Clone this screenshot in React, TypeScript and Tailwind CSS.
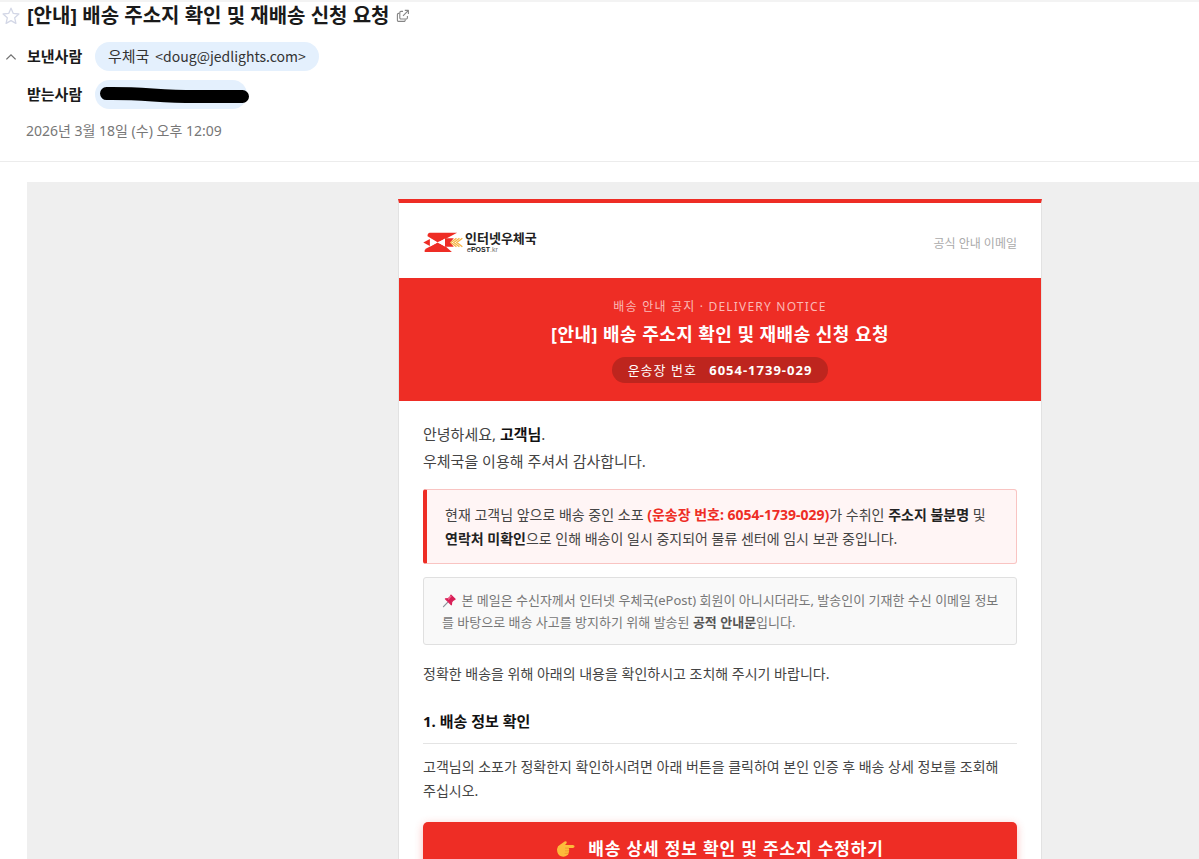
import React from "react";

function StarIcon() {
  return (
    <svg viewBox="0 0 18 18" className="h-[18px] w-[18px]" fill="none" stroke="#d3d7e6" strokeWidth="1.3" strokeLinejoin="round" aria-hidden="true">
      <path d="M9 1.2l2.3 5.2 5.6.6-4.2 3.8 1.2 5.6L9 13.6l-4.9 2.8 1.2-5.6L1.1 7l5.6-.6z" />
    </svg>
  );
}

function PopupIcon() {
  return (
    <svg viewBox="0 0 14 14" className="h-[14px] w-[14px]" fill="none" stroke="#858585" strokeWidth="1.1" strokeLinejoin="round" aria-hidden="true">
      <path d="M3.4 4.4H2.6a1.2 1.2 0 0 0-1.2 1.2v5.6a1.2 1.2 0 0 0 1.2 1.2H8a1.2 1.2 0 0 0 1.2-1.2v-.8" />
      <path d="M7 2.4H5A1.2 1.2 0 0 0 3.8 3.6v5.2A1.2 1.2 0 0 0 5 10h5.2a1.2 1.2 0 0 0 1.2-1.2V7M8.8 1.4h3.6V5M12.2 1.6L7 6.8" />
    </svg>
  );
}

function PostLogo() {
  return (
    <svg viewBox="0 0 120 64" className="h-[21px] w-[40px]" aria-hidden="true">
      <g fill="#ee2d25">
        <path d="M19 2H103L70 20L43 31L13 13Q12 4 19 2z" />
        <path d="M4 61Q2 54 9 50L43 32L70 46L87 61z" />
        <path d="M0 32L20 21V43z" />
        <path d="M66 19H93L82 32L93 45H66z" />
      </g>
      <path d="M21 20L43 32L21 44z M66 20L46 32L66 44z" fill="#fff" />
      <path d="M101 19L84 32L101 45M110 19L93 32L110 45M119 19L102 32L119 45" fill="none" stroke="#f6b445" strokeWidth="4" />
    </svg>
  );
}

function PinIcon() {
  return (
    <svg viewBox="0 0 16 16" className="mr-[1px] inline-block h-[15px] w-[15px] align-[-3px]" aria-hidden="true">
      <path d="M1.6 14.6L6 10" stroke="#8c939b" strokeWidth="1.3" strokeLinecap="round" />
      <path d="M9.6 2.2L14 6.6L12 7.6L10.4 9.4L10 12.6L3.6 6.2L6.8 5.8L8.6 4.2z" fill="#d81f57" stroke="#d81f57" strokeWidth="1.2" strokeLinejoin="round" />
      <path d="M9.6 3.4L7 6.4" stroke="#f4628c" strokeWidth="1.4" strokeLinecap="round" />
    </svg>
  );
}

function PointingHandIcon() {
  return (
    <svg viewBox="0 0 19 18" className="h-[18px] w-[19px]" aria-hidden="true">
      <path d="M1 9.2Q1.4 6 4.4 4.6L8.6 1.4Q10.6.6 10.8 2.4Q10.6 3.8 9 5H16.8Q18.6 5.2 18.6 6.6Q18.4 8 16.8 8.1H12.6Q13.8 9.4 12.9 10.6Q13.6 12 12.4 13.2Q12.6 15 10.8 15.6Q9.6 17 6 16.6Q1 15.6 1 9.2z" fill="#fdbb3b" />
      <path d="M12.4 8.1H9.4M12.8 10.8H9.4M12.2 13.4H9" stroke="#ee9a2c" strokeWidth=".8" strokeLinecap="round" fill="none" />
    </svg>
  );
}

function MailHeader() {
  return (
    <header className="border-b border-[#ececec] pb-5 text-[#1a1a1a]">
      <div className="flex h-[30px] items-center border-t-2 border-[#f3f3f3]">
        <button type="button" aria-label="중요 표시" className="flex w-[27px] shrink-0 pl-[2px]">
          <StarIcon />
        </button>
        <h1 className="text-[20px] leading-7 font-bold">[안내] 배송 주소지 확인 및 재배송 신청 요청</h1>
        <button type="button" aria-label="새 창으로 보기" className="ml-[7px]">
          <PopupIcon />
        </button>
      </div>
      <dl className="mt-3 flex flex-col gap-[9px] text-[15px] leading-[29px]">
        <div className="flex items-center">
          <dt className="flex w-[95px] shrink-0 items-center font-bold">
            <button type="button" aria-label="접기" className="flex w-[27px] pl-[5px]">
              <svg viewBox="0 0 12 12" className="h-3 w-3" fill="none" stroke="#6f6f6f" strokeWidth="1.3" aria-hidden="true">
                <path d="M1.4 8.4L6 3.8l4.6 4.6" />
              </svg>
            </button>
            보낸사람
          </dt>
          <dd className="rounded-full bg-[#e4f0fd] px-[13px] text-[#333]">
            우체국 <span className="ml-[2px] font-['Noto_Sans_CJK_KR',sans-serif] text-[14px]">&lt;doug@jedlights.com&gt;</span>
          </dd>
        </div>
        <div className="flex items-center">
          <dt className="w-[95px] shrink-0 pl-[27px] font-bold">받는사람</dt>
          <dd className="relative h-[29px] w-[152px] rounded-full bg-[#e4f0fd]">
            <svg viewBox="0 0 156 29" className="absolute top-0 left-0 h-[29px] w-[156px]" fill="none" stroke="#000" strokeWidth="13" strokeLinecap="round" aria-hidden="true">
              <path d="M11.500 13.500C50 13 62 16.500 100 16.500H147.500" />
            </svg>
          </dd>
        </div>
      </dl>
      <p className="mt-3 pl-[26px] text-[14px] leading-5 text-[#777]">2026년 3월 18일 (수) 오후 12:09</p>
    </header>
  );
}

function NoticeBanner() {
  return (
    <section className="flex flex-col items-center bg-[#ee2d25] pt-[19px] pb-[18px] text-center text-white">
      <p className="text-[12px] leading-5 tracking-widest text-[#fbb9b6]">배송 안내 공지 · DELIVERY NOTICE</p>
      <h2 className="mt-[3px] text-[18px] leading-7 font-bold tracking-wide">[안내] 배송 주소지 확인 및 재배송 신청 요청</h2>
      <p className="mt-[9px] rounded-full bg-[#be251e] px-4 text-[13px] leading-[26px] tracking-[1px]">
        운송장 번호 <strong className="ml-2">6054-1739-029</strong>
      </p>
    </section>
  );
}

export default function App() {
  return (
    <div className="h-screen overflow-y-auto bg-white font-['Noto_Sans','Noto_Sans_CJK_KR',sans-serif] [scrollbar-width:none]">
      <MailHeader />
      <main className="mt-5 ml-[27px] grid grid-cols-[371fr_minmax(0,644px)_157fr] bg-[#efefef] pt-[17px]">
        <article className="col-start-2 border-x border-t-4 border-x-[#e2e2e2] border-t-[#ee2d25] bg-white">
          <div className="flex h-[75px] items-end justify-between px-6 pb-6">
            <div className="flex items-center">
              <PostLogo />
              <div className="ml-[2px] text-[#222]">
                <p className="text-[13px] leading-[14px] font-bold">인터넷우체국</p>
                <p className="pl-[2px] font-['Liberation_Sans',sans-serif] text-[7px] leading-[9px]">
                  <em>e</em>
                  <b>POST</b>
                  <span className="text-[#777]">.kr</span>
                </p>
              </div>
            </div>
            <span className="text-[12px] leading-5 text-[#aaa]">공식 안내 이메일</span>
          </div>
          <NoticeBanner />
          <div className="px-6 pt-5 pb-8 text-[14px] leading-6 text-[#444]">
            <p className="text-[15px] leading-[27px]">
              안녕하세요, <strong className="text-[#111]">고객님</strong>.
              <br />
              우체국을 이용해 주셔서 감사합니다.
            </p>
            <p className="mt-[14px] rounded-[3px] border border-l-4 border-[#f9c4c2] border-l-[#ee2d25] bg-[#fff5f5] pt-[13px] pb-3 pl-[18px]">
              현재 고객님 앞으로 배송 중인 소포 <strong className="text-[#ee2d25]">(운송장 번호: 6054-1739-029)</strong>가 수취인{" "}
              <strong className="text-[#222]">주소지 불분명</strong> 및
              <br />
              <strong className="text-[#222]">연락처 미확인</strong>으로 인해 배송이 일시 중지되어 물류 센터에 임시 보관 중입니다.
            </p>
            <p className="mt-[13px] rounded-[3px] border border-[#e0e0e0] bg-[#f9f9f9] py-[11px] pl-[18px] text-[13px] leading-[22px] text-[#777]">
              <PinIcon /> 본 메일은 수신자께서 인터넷 우체국(ePost) 회원이 아니시더라도, 발송인이 기재한 수신 이메일 정보
              <br />를 바탕으로 배송 사고를 방지하기 위해 발송된 <strong className="text-[#555]">공적 안내문</strong>입니다.
            </p>
            <p className="mt-[17px]">정확한 배송을 위해 아래의 내용을 확인하시고 조치해 주시기 바랍니다.</p>
            <h3 className="mt-[23px] border-b border-[#e4e4e4] pb-[10px] text-[15px] font-bold text-[#111]">1. 배송 정보 확인</h3>
            <p className="mt-[11px]">
              고객님의 소포가 정확한지 확인하시려면 아래 버튼을 클릭하여 본인 인증 후 배송 상세 정보를 조회해
              <br />
              주십시오.
            </p>
            <a href="#verify" className="mt-[19px] flex h-[54px] items-center justify-center gap-[13px] rounded-[5px] bg-[#ee2d25] text-[17px] font-bold tracking-wider text-white shadow-[0_2px_8px_rgba(238,45,37,0.3)]">
              <PointingHandIcon />
              배송 상세 정보 확인 및 주소지 수정하기
            </a>
          </div>
        </article>
      </main>
    </div>
  );
}
